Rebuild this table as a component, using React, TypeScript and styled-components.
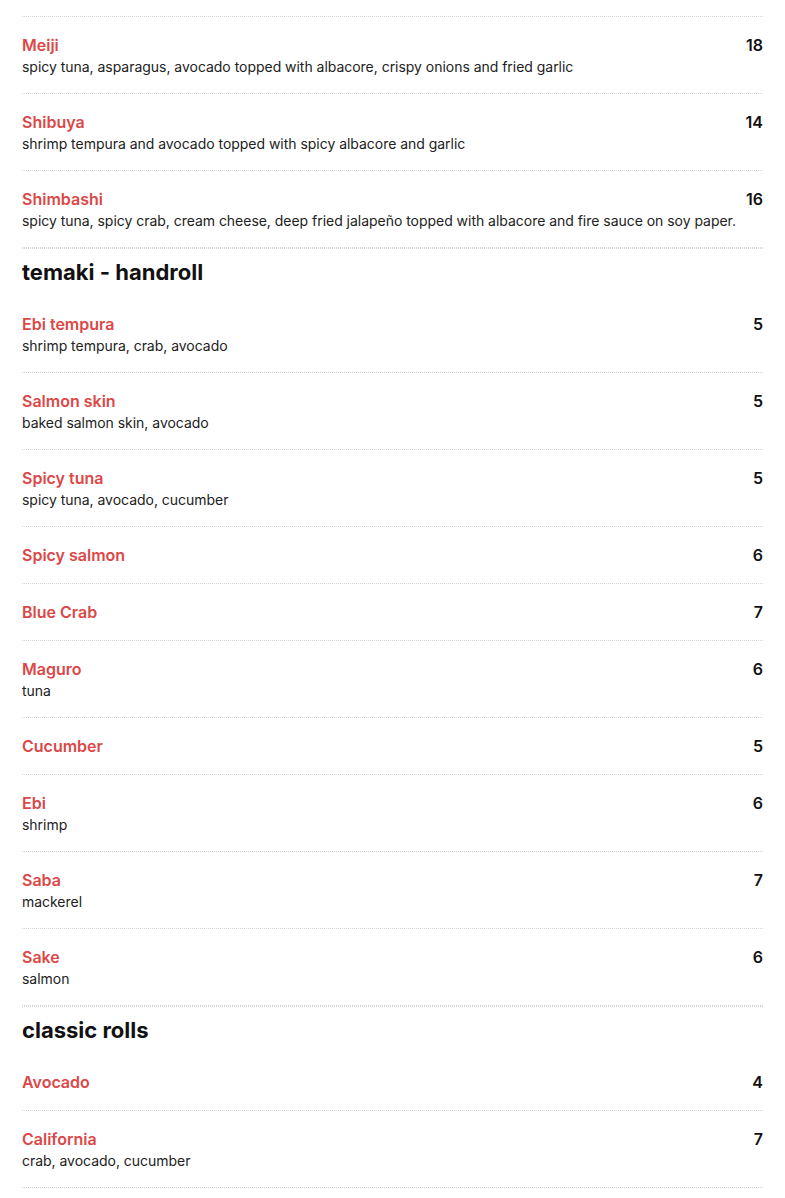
import styled, { createGlobalStyle } from 'styled-components';

const GlobalStyle = createGlobalStyle`
  * {
    box-sizing: border-box;
  }

  body {
    margin: 0;
    background: #ffffff;
    font-family: Inter, 'Noto Sans', sans-serif;
    color: #111111;
  }
`;

const Page = styled.main`
  padding: 16px 22px 0;
`;

const Section = styled.section`
  border-top: 1px dotted #d4d4d4;
`;

const SectionTitle = styled.h2`
  margin: 0;
  padding: 10px 0;
  font-size: 22px;
  line-height: 27px;
  font-weight: 700;
  color: #111111;
`;

const ItemList = styled.ul`
  list-style: none;
  margin: 0;
  padding: 0;
`;

const Item = styled.li`
  padding: 16px 0;
  border-bottom: 1px dotted #d4d4d4;
`;

const ItemHead = styled.div`
  display: flex;
  justify-content: space-between;
  align-items: center;
  gap: 16px;
  height: 24px;
`;

const ItemName = styled.span`
  font-size: 16px;
  line-height: 24px;
  font-weight: 600;
  color: #dc4848;
`;

const ItemDesc = styled.p`
  margin: 0;
  font-size: 14px;
  line-height: 20px;
  letter-spacing: -0.03px;
  color: #222222;
`;

const Price = styled.span`
  font-size: 16px;
  line-height: 24px;
  font-weight: 600;
  color: #111111;
`;

type MenuItem = { name: string; desc?: string; price: number };
type MenuSection = { title?: string; items: MenuItem[] };

const sections: MenuSection[] = [
  {
    items: [
      {
        name: 'Meiji',
        desc: 'spicy tuna, asparagus, avocado topped with albacore, crispy onions and fried garlic',
        price: 18,
      },
      {
        name: 'Shibuya',
        desc: 'shrimp tempura and avocado topped with spicy albacore and garlic',
        price: 14,
      },
      {
        name: 'Shimbashi',
        desc: 'spicy tuna, spicy crab, cream cheese, deep fried jalapeño topped with albacore and fire sauce on soy paper.',
        price: 16,
      },
    ],
  },
  {
    title: 'temaki - handroll',
    items: [
      { name: 'Ebi tempura', desc: 'shrimp tempura, crab, avocado', price: 5 },
      { name: 'Salmon skin', desc: 'baked salmon skin, avocado', price: 5 },
      { name: 'Spicy tuna', desc: 'spicy tuna, avocado, cucumber', price: 5 },
      { name: 'Spicy salmon', price: 6 },
      { name: 'Blue Crab', price: 7 },
      { name: 'Maguro', desc: 'tuna', price: 6 },
      { name: 'Cucumber', price: 5 },
      { name: 'Ebi', desc: 'shrimp', price: 6 },
      { name: 'Saba', desc: 'mackerel', price: 7 },
      { name: 'Sake', desc: 'salmon', price: 6 },
    ],
  },
  {
    title: 'classic rolls',
    items: [
      { name: 'Avocado', price: 4 },
      { name: 'California', desc: 'crab, avocado, cucumber', price: 7 },
    ],
  },
];

export default function App() {
  return (
    <>
      <GlobalStyle />
      <Page>
        {sections.map((section, i) => (
          <Section key={section.title ?? i}>
            {section.title && <SectionTitle>{section.title}</SectionTitle>}
            <ItemList>
              {section.items.map((item) => (
                <Item key={item.name}>
                  <ItemHead>
                    <ItemName>{item.name}</ItemName>
                    <Price>{item.price}</Price>
                  </ItemHead>
                  {item.desc && <ItemDesc>{item.desc}</ItemDesc>}
                </Item>
              ))}
            </ItemList>
          </Section>
        ))}
      </Page>
    </>
  );
}
